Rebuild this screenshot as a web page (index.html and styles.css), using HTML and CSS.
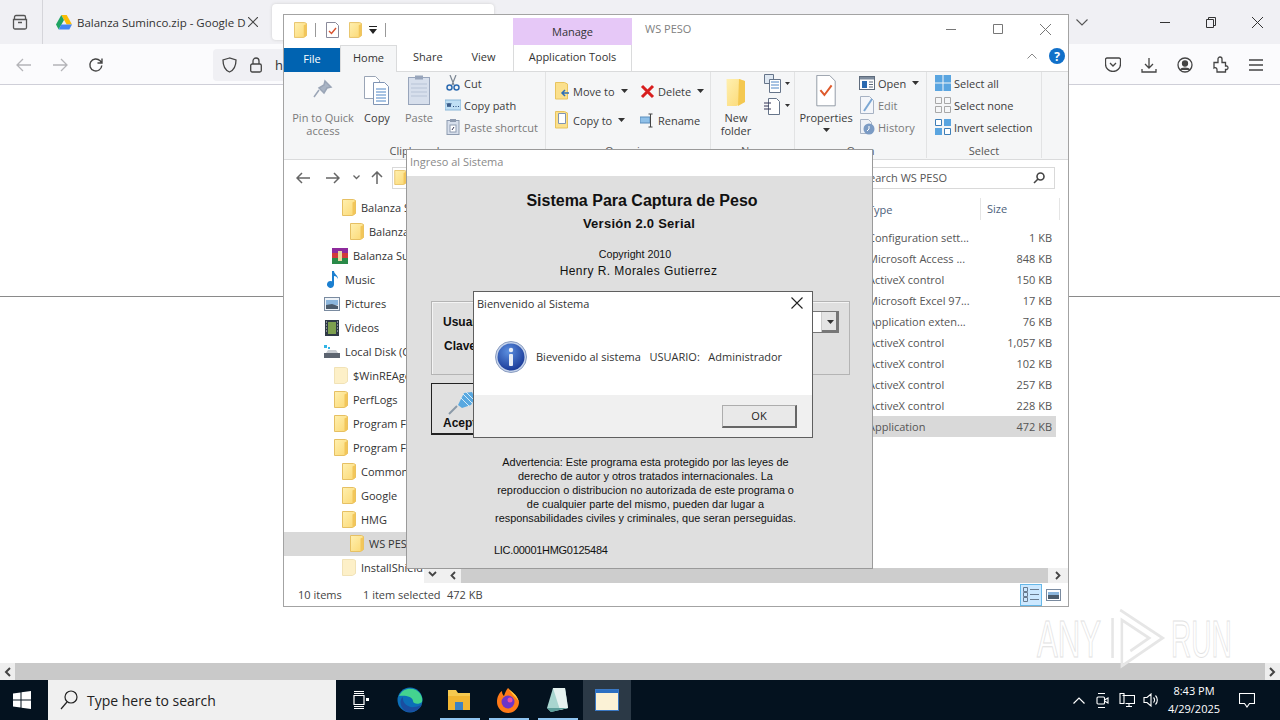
FILE: index.html
```html
<!DOCTYPE html>
<html lang="en">
<head>
<meta charset="utf-8">
<title>Sistema Para Captura de Peso</title>
<link rel="stylesheet" href="styles.css">
</head>
<body>
<svg class="sprites" width="0" height="0" aria-hidden="true">
  <defs>
    <linearGradient id="fy" x1="0" y1="0" x2="1" y2="1"><stop offset="0" stop-color="#fff0b0"/><stop offset="1" stop-color="#fbd873"/></linearGradient>
    <radialGradient id="ib" cx=".4" cy=".3" r=".8"><stop offset="0" stop-color="#5c8fe0"/><stop offset="1" stop-color="#12308f"/></radialGradient>
    <symbol id="folder" viewBox="0 0 14 17"><path d="M.5.5h11l2 1v13l-3 2h-10z" fill="url(#fy)" stroke="#e6c063" stroke-width="1"/><path d="M10.5 3.5v13.2l3-2.2V2z" fill="#f2c65a"/></symbol>
    <symbol id="pale" viewBox="0 0 14 17"><path d="M.5.5h11l2 1v13l-3 2h-10z" fill="#fdf0c8" stroke="#f1e2b6" stroke-width="1"/></symbol>
    <symbol id="caret" viewBox="0 0 7 4"><path d="M0 0h7L3.5 4z" fill="#333"/></symbol>
  </defs>
</svg>

<header class="tabstrip">
  <svg class="ff-view" width="16" height="16" viewBox="0 0 16 16" fill="none" stroke="#555" stroke-width="1.3"><path d="M1.5 5.5h13v8a1.5 1.5 0 0 1-1.5 1.5H3A1.5 1.5 0 0 1 1.5 13.5zM2.5 5.5V3a1.500 1.500 0 0 1 1.500-1.500h8A1.500 1.500 0 0 1 13.500 3v2.500M6 8.500h4"/></svg>
  <div class="tab">
    <svg class="tab-fav" width="16" height="15" viewBox="0 0 16 15"><path d="M5.300 0h5.400L16 9.500h-5.300z" fill="#fbbc04"/><path d="M5.300 0 0 9.500l2.700 5L8 5z" fill="#1fa463"/><path d="M2.700 14.500h10.600L16 9.500H5.300z" fill="#4285f4"/></svg>
    <span class="tab-title">Balanza Suminco.zip - Google D</span>
    <svg class="tab-x" width="10" height="10" viewBox="0 0 10 10" stroke="#444" stroke-width="1.100"><path d="M0 0l10 10M10 0L0 10"/></svg>
  </div>
  <div class="tab-active"><svg width="10" height="14" viewBox="0 0 10 14"><path d="M9 0a8 8 0 0 0 0 14z" fill="#2d8a6e"/></svg></div>
  <div class="strip-right">
    <svg class="chev" width="12" height="7" viewBox="0 0 12 7" fill="none" stroke="#555" stroke-width="1.100"><path d="M.5.500 6 6l5.500-5.500"/></svg>
    <svg class="wc wc-min" width="10" height="10" viewBox="0 0 10 10" stroke="#333"><path d="M0 5.500h10"/></svg>
    <svg class="wc" width="10" height="11" viewBox="0 0 10 11" fill="none" stroke="#333"><path d="M.5 2.500h7v8h-7zM2.500 2.500v-2h7v8h-2"/></svg>
    <svg class="wc" width="11" height="11" viewBox="0 0 11 11" stroke="#333"><path d="M0 0l11 11M11 0L0 11"/></svg>
  </div>
</header>

<nav class="toolbar">
  <svg class="tb-b" width="16" height="14" viewBox="0 0 16 14" fill="none" stroke="#b4b4b8" stroke-width="1.300"><path d="M15 7H1M7 1 1 7l6 6"/></svg>
  <svg class="tb-b" width="16" height="14" viewBox="0 0 16 14" fill="none" stroke="#b4b4b8" stroke-width="1.300"><path d="M1 7h14M9 1l6 6-6 6"/></svg>
  <svg class="tb-b" width="16" height="16" viewBox="0 0 16 16" fill="none" stroke="#444" stroke-width="1.400"><path d="M13.800 8.500a6 6 0 1 1-1.700-4.700L14 6M14 1.500V6H9.500"/></svg>
  <div class="urlbar">
    <svg width="15" height="16" viewBox="0 0 15 16" fill="none" stroke="#444" stroke-width="1.300"><path d="M7.500 1 1 3c0 6 1.500 10 6.500 12C12.500 13 14 9 14 3z"/></svg>
    <svg class="lock" width="12" height="16" viewBox="0 0 12 16" fill="none" stroke="#444" stroke-width="1.300"><rect x=".7" y="7" width="10.600" height="8" rx="1.500"/><path d="M3 7V4a3 3 0 0 1 6 0v3"/></svg>
    <span class="url-h">h</span>
  </div>
  <div class="tb-right">
    <svg width="16" height="15" viewBox="0 0 16 15" fill="none" stroke="#444" stroke-width="1.300"><path d="M2 1h12a1.500 1.500 0 0 1 1.500 1.500V7a7.500 7.500 0 0 1-15 0V2.500A1.500 1.500 0 0 1 2 1zM5 6l3 3 3-3"/></svg>
    <svg width="16" height="16" viewBox="0 0 16 16" fill="none" stroke="#444" stroke-width="1.300"><path d="M8 1v10M4 7l4 4 4-4M1 12v3h14v-3"/></svg>
    <svg width="16" height="16" viewBox="0 0 16 16" fill="none" stroke="#444" stroke-width="1.300"><circle cx="8" cy="8" r="7"/><circle cx="8" cy="6.500" r="2.500" fill="#444"/><path d="M3.500 13c1-2.500 8-2.500 9 0" fill="#444"/></svg>
    <svg width="16" height="17" viewBox="0 0 16 17" fill="none" stroke="#444" stroke-width="1.300"><path d="M1 6.500h4V3a2 2 0 0 1 4 0v3.500h3.500V10H14a2 2 0 0 1 0 3.500h-1.500V16H4v-2.500a2 2 0 0 0-3-1.500z"/></svg>
    <svg width="14" height="12" viewBox="0 0 14 12" stroke="#444" stroke-width="1.300"><path d="M0 1h14M0 6h14M0 11h14"/></svg>
  </div>
</nav>

<main class="page"><hr class="page-line"></main>

<div class="page-scroll">
  <span class="ps-btn"><svg width="7" height="10" viewBox="0 0 7 10" fill="none" stroke="#444" stroke-width="2"><path d="M6 1 2 5l4 4"/></svg></span>
  <span class="ps-btn"><svg width="7" height="10" viewBox="0 0 7 10" fill="none" stroke="#444" stroke-width="2"><path d="m1 1 4 4-4 4"/></svg></span>
</div>

<footer class="taskbar">
  <div class="start"><svg width="18" height="18" viewBox="0 0 18 18" fill="#fff"><path d="M0 2.500 7.500 1.400v7.100H0zM8.500 1.300 18 0v8.500H8.500zM0 9.500h7.500v7.100L0 15.500zM8.500 9.500H18V18l-9.500-1.300z"/></svg></div>
  <div class="search">
    <svg width="18" height="20" viewBox="0 0 18 20" fill="none" stroke="#222" stroke-width="1.200"><circle cx="11" cy="7" r="6"/><path d="M7 12 1 19"/></svg>
    <span>Type here to search</span>
  </div>
  <div class="task-icons">
    <span class="ti"><svg width="16" height="18" viewBox="0 0 16 18" fill="none" stroke="#fff" stroke-width="1.200"><path d="M1 .5h10M1 17.500h10M1 4.500h10v9H1zM1 2.500h10M1 15.500h10"/><rect x="13" y="7" width="3" height="3" fill="#fff" stroke="none"/></svg></span>
    <span class="ti"><svg width="26" height="26" viewBox="0 0 26 26"><circle cx="13" cy="13" r="12.500" fill="#0c6fb8"/><path d="M2 9C5 2 13 0 19 3c5 3 7 8 6 12-3 3-9 2-9-1 0-5-9-6-14-5z" fill="#44d38f"/><path d="M8 24C3 20 2 13 6 10c-1 6 5 11 11 10 3 0 6-1 8-3-2 6-10 10-17 7z" fill="#1a4ea0"/></svg></span>
    <span class="ti ti-run"><svg width="24" height="22" viewBox="0 0 24 22"><path d="M1 1h8l2 3h12v17H1z" fill="#f6c94f"/><rect x="1" y="7" width="22" height="14" fill="#f2b632"/><rect x="8" y="13" width="8" height="8" fill="#3d82c4"/></svg></span>
    <span class="ti ti-run"><svg width="24" height="26" viewBox="0 0 24 26"><path d="M12 1c3 4 9 6 11 14a11 11 0 0 1-22 0C1 10 3 6 6 4c0 3 1 4 2 5 1-3 2-6 4-8z" fill="#ff7a18"/><path d="M12 1c3 4 9 6 11 14-3-5-6-6-11-14z" fill="#ffc93a"/><circle cx="12" cy="15" r="6.500" fill="#6d35c9"/><circle cx="14" cy="13" r="2.500" fill="#f04ca0"/></svg></span>
    <span class="ti ti-run"><svg width="22" height="26" viewBox="0 0 22 26"><path d="M7 1h12l3 20-17 4L1 21z" fill="#a8d5cf"/><path d="M7 1h12l3 20-8 2z" fill="#e6f2f0"/><path d="M1 21l4 4 17-4z" fill="#5c9e9a"/></svg></span>
    <span class="ti ti-active"><svg width="24" height="22" viewBox="0 0 24 22"><rect x=".5" y=".5" width="23" height="21" fill="#fbf2d6" stroke="#3a78c4"/><rect x="1" y="1" width="22" height="3" fill="#2b6fc2"/></svg></span>
  </div>
  <div class="tray">
    <svg width="12" height="7" viewBox="0 0 12 7" fill="none" stroke="#fff" stroke-width="1.200"><path d="M.5 6.500 6 1l5.500 5.500"/></svg>
    <svg class="tr-m" width="13" height="17" viewBox="0 0 13 17" fill="none" stroke="#fff" stroke-width="1.100"><path d="M2 1.500h7M2 15.500h7"/><rect x="1" y="5" width="7.500" height="7" rx="1"/><path d="M8.500 8 12 6v5L8.500 9"/></svg>
    <svg class="tr-n" width="16" height="14" viewBox="0 0 16 14" fill="none" stroke="#fff" stroke-width="1.100"><path d="M3.500 2.500h12v8h-9M1 .5h4v10H1zM7 13.500h6M10 10.500v3"/></svg>
    <svg class="tr-v" width="16" height="14" viewBox="0 0 16 14" fill="none" stroke="#fff" stroke-width="1.100"><path d="M1 4.500h3L8 1v12L4 9.500H1zM10.500 4.500a3.500 3.500 0 0 1 0 5M12.500 2.500a6.500 6.500 0 0 1 0 9"/></svg>
    <div class="clock"><span>8:43 PM</span><span>4/29/2025</span></div>
    <svg class="notif" width="16" height="15" viewBox="0 0 16 15" fill="none" stroke="#fff" stroke-width="1.100"><path d="M.5.500h15v10h-5L8 14l-2.500-3.500h-5z"/></svg>
  </div>
</footer>

<section class="explorer">
  <div class="ex-title">
    <svg class="qa-f" width="13" height="16"><use href="#folder"/></svg>
    <i class="qa-sep"></i>
    <svg class="qa-d" width="13" height="16" viewBox="0 0 13 16"><path d="M.5.500h9l3 3v12H.5z" fill="#fff" stroke="#8a8a9a"/><path d="m3 9 2.500 2.500L10 6" fill="none" stroke="#d8502c" stroke-width="1.400"/></svg>
    <svg class="qa-f2" width="13" height="16"><use href="#folder"/></svg>
    <svg class="qa-a" width="8" height="8" viewBox="0 0 8 8"><path d="M0 0h8v1H0zM0 3h8L4 8z" fill="#222"/></svg>
    <i class="qa-sep qa-sep2"></i>
    <div class="manage">Manage</div>
    <span class="ex-name">WS PESO</span>
    <div class="ex-ctrl">
      <svg width="10" height="10" viewBox="0 0 10 10" stroke="#777"><path d="M0 5.500h10"/></svg>
      <svg width="10" height="10" viewBox="0 0 10 10" fill="none" stroke="#777"><path d="M.5.500h9v9h-9z"/></svg>
      <svg width="11" height="11" viewBox="0 0 11 11" stroke="#777"><path d="M0 0l11 11M11 0L0 11"/></svg>
    </div>
  </div>
  <div class="ex-tabs">
    <span class="t-file">File</span>
    <span class="t-home">Home</span>
    <span class="t-share">Share</span>
    <span class="t-view">View</span>
    <span class="t-app">Application Tools</span>
    <svg class="t-up" width="10" height="6" viewBox="0 0 10 6" fill="none" stroke="#888"><path d="M.5 5.500 5 1l4.500 4.500"/></svg>
    <span class="t-help">?</span>
  </div>
  <div class="ribbon">
    <div class="rg rg1">
      <div class="rg-body">
        <div class="big big-pin dis">
          <svg width="24" height="32" viewBox="0 0 24 32"><path d="M14 6l6 6-4 1-3 5-5-5 5-3zM8 15l-5 7" fill="#a9b4c4" stroke="#9aa5b6" stroke-width="1.500"/></svg>
          <span>Pin to Quick<br>access</span>
        </div>
        <div class="big big-copy">
          <svg width="26" height="32" viewBox="0 0 26 32"><path d="M.5 1.500h11l4 4v18H.5z" fill="#fff" stroke="#9aa5b6"/><path d="M9.500 7.500h11l4 4v18h-15z" fill="#fff" stroke="#7f94b4"/><path d="M12 14h10M12 17h10M12 20h10M12 23h10M12 26h10" stroke="#4f86c6"/></svg>
          <span>Copy</span>
        </div>
        <div class="big big-paste dis">
          <svg width="22" height="32" viewBox="0 0 22 32"><rect x=".5" y="2.500" width="21" height="27" fill="#d7dfec" stroke="#98a5bb"/><rect x="7" y=".5" width="8" height="4" fill="#98a5bb"/><path d="M3 9h16M3 13h16M3 17h16M3 21h16" stroke="#b7c3d6"/></svg>
          <span>Paste</span>
        </div>
        <div class="small">
          <div class="sm"><svg width="16" height="16" viewBox="0 0 16 16" fill="none"><path d="M5 0l4 10M11 0 7 10" stroke="#7c8794" stroke-width="1.200"/><circle cx="4.500" cy="12.500" r="2.500" stroke="#2c6ab0" stroke-width="1.500"/><circle cx="11.500" cy="12.500" r="2.500" stroke="#2c6ab0" stroke-width="1.500"/></svg>Cut</div>
          <div class="sm"><svg width="16" height="16" viewBox="0 0 16 16"><rect y="3" width="16" height="10" fill="#bfe0f5" stroke="#8ab6d8"/><path d="M2 6l1 4 1-4 1 4 1-4M8 9.500h1M10.500 9.500h1M13 9.500h1" fill="none" stroke="#2b4e7e"/></svg>Copy path</div>
          <div class="sm dis"><svg width="16" height="16" viewBox="0 0 16 16"><rect x="2" y="1.500" width="12" height="14" fill="#d7dfec" stroke="#8e9bb0"/><rect x="5" y="0" width="6" height="3" fill="#8e9bb0"/><rect x="5" y="6" width="6" height="7" fill="#fff" stroke="#8e9bb0"/><path d="M7 11l2-3" stroke="#335"/></svg>Paste shortcut</div>
        </div>
      </div>
      <div class="rg-label">Clipboard</div>
    </div>
    <div class="rg rg2">
      <div class="rg-body">
        <div class="org">
          <div class="org-row"><svg width="15" height="18" viewBox="0 0 15 18"><path d="M.5.500h9l3 1.500v15H.5z" fill="#fbe08c" stroke="#e8c45e"/><path d="M14 11H7M10 8l-3 3 3 3" fill="none" stroke="#2d6fb8" stroke-width="1.500"/></svg>Move to<svg class="car" width="7" height="4"><use href="#caret"/></svg></div>
          <div class="org-row"><svg width="15" height="18" viewBox="0 0 15 18"><path d="M.5.500h9l3 1.500v15H.5z" fill="#fbe08c" stroke="#e8c45e"/><path d="M3.500 2.500h7v10h-7z" fill="#fff" stroke="#7f94b4"/></svg>Copy to<svg class="car" width="7" height="4"><use href="#caret"/></svg></div>
        </div>
        <div class="org org-b">
          <div class="org-row"><svg width="15" height="15" viewBox="0 0 15 15" fill="none" stroke="#d81e1e" stroke-width="3"><path d="m2 2 11 11M13 2 2 13"/></svg>Delete<svg class="car" width="7" height="4"><use href="#caret"/></svg></div>
          <div class="org-row"><svg width="15" height="15" viewBox="0 0 15 15"><rect y="4" width="10" height="6" fill="#8fc0e8" stroke="#5b8dbd"/><path d="M10.500 1v13M8.500 1h4M8.500 14h4" stroke="#444"/></svg>Rename</div>
        </div>
      </div>
      <div class="rg-label">Organize</div>
    </div>
    <div class="rg rg3">
      <div class="rg-body">
        <div class="big big-new">
          <svg width="20" height="32" viewBox="0 0 20 32"><path d="M.5 4h13l5 2v21l-8 4H1z" fill="url(#fy)"/><path d="M13 4l6 2v21l-7 4z" fill="#f4c850"/></svg>
          <span>New<br>folder</span>
        </div>
        <div class="new-side">
          <span><svg width="17" height="19" viewBox="0 0 17 19" fill="none" stroke="#66758a"><path d="M.5.500h9v9h-9z" fill="#dfe8f2"/><path d="M5.500 5.500h11v13h-11z" fill="#fff"/><path d="M7 8h8M7 11h8M7 14h8" stroke="#4f86c6"/></svg><svg class="car" width="5" height="3" viewBox="0 0 7 4"><use href="#caret"/></svg></span>
          <span><svg width="17" height="19" viewBox="0 0 17 19" fill="none" stroke="#66758a"><path d="M4.500 2.500h8l3 3v13h-11z" fill="#fff"/><path d="M0 7h7M0 10h5M0 13h7" stroke="#335"/></svg><svg class="car" width="5" height="3" viewBox="0 0 7 4"><use href="#caret"/></svg></span>
        </div>
      </div>
      <div class="rg-label">New</div>
    </div>
    <div class="rg rg4">
      <div class="rg-body">
        <div class="big big-prop">
          <svg width="24" height="40" viewBox="0 0 24 40"><path d="M.5.500h16l7 7v31H.5z" fill="#fff" stroke="#7c8794"/><path d="M5 19l5 6 9-12" fill="none" stroke="#de5a2c" stroke-width="2.500"/></svg>
          <span>Properties</span>
          <svg class="car-c" width="7" height="4"><use href="#caret"/></svg>
        </div>
        <div class="small small-open">
          <div class="sm"><svg width="16" height="16" viewBox="0 0 16 16"><rect x=".5" y="1.500" width="15" height="13" fill="#fff" stroke="#5e6b7c"/><rect x="1" y="2" width="14" height="2.500" fill="#7e8c9e"/><rect x="3" y="6" width="5" height="7" fill="#2c6ab0"/><path d="M10 7h4M10 9.500h4M10 12h4" stroke="#5e6b7c"/></svg>Open<svg class="car" width="7" height="4"><use href="#caret"/></svg></div>
          <div class="sm dis"><svg width="16" height="18" viewBox="0 0 16 18"><path d="M1.500.500h9l4 4v13h-13z" fill="#f4f6fa" stroke="#a7b2c3"/><path d="M5 15 13 3" stroke="#7ba7d4" stroke-width="2"/></svg>Edit</div>
          <div class="sm dis"><svg width="16" height="16" viewBox="0 0 16 16"><path d="M1.500.500h8l3 3v11h-11z" fill="#eef1f6" stroke="#a7b2c3"/><circle cx="10" cy="10" r="5.500" fill="#7b9bc4"/><path d="M10 7v3l-2 2" stroke="#fff" fill="none"/></svg>History</div>
        </div>
      </div>
      <div class="rg-label">Open</div>
    </div>
    <div class="rg rg5">
      <div class="rg-body">
        <div class="small small-sel">
          <div class="sm"><svg width="16" height="16" viewBox="0 0 16 16"><path d="M0 0h7.500v7.500H0zM8.500 0H16v7.500H8.500zM0 8.500h7.500V16H0zM8.500 8.500H16V16H8.500z" fill="#5aa5e0"/></svg>Select all</div>
          <div class="sm"><svg width="16" height="16" viewBox="0 0 16 16" fill="none" stroke="#a8a8a8"><path d="M.5.500h6v6h-6zM9.500.500h6v6h-6zM.5 9.500h6v6h-6zM9.500 9.500h6v6h-6z"/></svg>Select none</div>
          <div class="sm"><svg width="16" height="16" viewBox="0 0 16 16" stroke="#3f7fb8"><path d="M.5.500h6v6h-6zM9.500 9.500h6v6h-6z" fill="#fff"/><path d="M9 0h7v7H9zM0 9h7v7H0z" fill="#5aa5e0" stroke="none"/></svg>Invert selection</div>
        </div>
      </div>
      <div class="rg-label">Select</div>
    </div>
  </div>
  <div class="ex-nav">
    <svg width="14" height="12" viewBox="0 0 14 12" fill="none" stroke="#666" stroke-width="1.500"><path d="M14 6H1M6 1 1 6l5 5"/></svg>
    <svg class="n-fw" width="14" height="12" viewBox="0 0 14 12" fill="none" stroke="#666" stroke-width="1.500"><path d="M0 6h13M8 1l5 5-5 5"/></svg>
    <svg class="n-dn" width="7" height="5" viewBox="0 0 7 5" fill="none" stroke="#666" stroke-width="1.300"><path d="m.5.500 3 3 3-3"/></svg>
    <svg class="n-up" width="12" height="13" viewBox="0 0 12 13" fill="none" stroke="#666" stroke-width="1.500"><path d="M6 13V1M1 6l5-5 5 5"/></svg>
    <div class="addr"><svg width="13" height="15"><use href="#folder"/></svg></div>
    <div class="srch"><span>Search WS PESO</span><svg width="12" height="12" viewBox="0 0 12 12" fill="none" stroke="#444" stroke-width="1.600"><circle cx="7.500" cy="4.500" r="3.500"/><path d="M5 7 1 11"/></svg></div>
  </div>
  <div class="ex-main">
    <div class="tree">
      <div class="tr l3"><svg width="14" height="17"><use href="#folder"/></svg>Balanza Suminco</div>
      <div class="tr l4"><svg width="14" height="17"><use href="#folder"/></svg>Balanza Suminco</div>
      <div class="tr l2"><svg width="16" height="16" viewBox="0 0 16 16"><rect width="16" height="5" fill="#8e2a9c"/><rect y="5" width="16" height="5" fill="#d33a3a"/><rect y="10" width="16" height="6" fill="#2a8a48"/><rect x="6" y="3" width="4" height="10" fill="#e8d9a0"/></svg>Balanza Suminco.zip</div>
      <div class="tr l1"><svg width="16" height="17" viewBox="0 0 14 17" fill="#1b7fd0"><path d="M7 0h2c0 3 4 4 4 8-1-2-2-3-4-3v8.500a3.500 3.500 0 1 1-2-3.200z"/></svg>Music</div>
      <div class="tr l1"><svg width="16" height="14" viewBox="0 0 16 14"><rect x=".5" y=".5" width="15" height="13" fill="#eef3f8" stroke="#7a8ba0"/><path d="M2 3h12v5H2z" fill="#8cb6dc"/><path d="M2 8l6-1 6 2v3H2z" fill="#4c5c6c"/></svg>Pictures</div>
      <div class="tr l1"><svg width="16" height="16" viewBox="0 0 14 16"><rect width="14" height="16" fill="#2f3a46"/><rect x="3" y="2" width="8" height="12" fill="#7ea04e"/><path d="M1 2h1M1 5h1M1 8h1M1 11h1M12 2h1M12 5h1M12 8h1M12 11h1" stroke="#ddd"/></svg>Videos</div>
      <div class="tr l1"><svg width="16" height="14" viewBox="0 0 16 14"><rect y="8" width="16" height="5" fill="#5c6470"/><path d="M2 8l2-3h8l2 3z" fill="#c8ccd2"/><rect y="0" width="3" height="3" fill="#33b5e5"/><rect x="4" y="2" width="2" height="2" fill="#33b5e5"/></svg>Local Disk (C:)</div>
      <div class="tr l2b"><svg width="14" height="17"><use href="#pale"/></svg>$WinREAgent</div>
      <div class="tr l2b"><svg width="14" height="17"><use href="#folder"/></svg>PerfLogs</div>
      <div class="tr l2b"><svg width="14" height="17"><use href="#folder"/></svg>Program Files</div>
      <div class="tr l2b"><svg width="14" height="17"><use href="#folder"/></svg>Program Files (x86)</div>
      <div class="tr l3"><svg width="14" height="17"><use href="#folder"/></svg>Common Files</div>
      <div class="tr l3"><svg width="14" height="17"><use href="#folder"/></svg>Google</div>
      <div class="tr l3"><svg width="14" height="17"><use href="#folder"/></svg>HMG</div>
      <div class="tr l4 tr-sel"><svg width="14" height="17"><use href="#folder"/></svg>WS PESO</div>
      <div class="tr l3"><svg width="14" height="17"><use href="#pale"/></svg>InstallShield</div>
    </div>
    <div class="tree-sb"><svg width="9" height="6" viewBox="0 0 9 6" fill="none" stroke="#444" stroke-width="1.800"><path d="m1 1 3.500 3.500L8 1"/></svg></div>
    <div class="list-col">
      <div class="list">
        <div class="l-head"><span class="c-type">Type</span><span class="c-size">Size</span></div>
        <div class="l-row"><span class="c-type">Configuration sett...</span><span class="c-kb">1 KB</span></div>
        <div class="l-row"><span class="c-type">Microsoft Access ...</span><span class="c-kb">848 KB</span></div>
        <div class="l-row"><span class="c-type">ActiveX control</span><span class="c-kb">150 KB</span></div>
        <div class="l-row"><span class="c-type">Microsoft Excel 97...</span><span class="c-kb">17 KB</span></div>
        <div class="l-row"><span class="c-type">Application exten...</span><span class="c-kb">76 KB</span></div>
        <div class="l-row"><span class="c-type">ActiveX control</span><span class="c-kb">1,057 KB</span></div>
        <div class="l-row"><span class="c-type">ActiveX control</span><span class="c-kb">102 KB</span></div>
        <div class="l-row"><span class="c-type">ActiveX control</span><span class="c-kb">257 KB</span></div>
        <div class="l-row"><span class="c-type">ActiveX control</span><span class="c-kb">228 KB</span></div>
        <div class="l-row l-sel"><span class="c-type">Application</span><span class="c-kb">472 KB</span></div>
      </div>
      <div class="list-sb">
        <span class="sb-btn"><svg width="6" height="9" viewBox="0 0 6 9" fill="none" stroke="#444" stroke-width="1.800"><path d="M5 1 1.500 4.500 5 8"/></svg></span>
        <span class="sb-thumb"></span>
        <span class="sb-btn sb-r"><svg width="6" height="9" viewBox="0 0 6 9" fill="none" stroke="#444" stroke-width="1.800"><path d="m1 1 3.500 3.500L1 8"/></svg></span>
      </div>
    </div>
  </div>
  <div class="ex-status">
    <span class="st-a">10 items</span><span class="st-b">1 item selected</span><span class="st-c">472 KB</span>
    <div class="views">
      <span class="v-on"><svg width="16" height="15" viewBox="0 0 16 15" fill="none" stroke="#6a7c90"><path d="M.5.500h4v4h-4zM.5 5.500h4v4h-4zM.5 10.500h4v4h-4zM7 2.500h9M7 7.500h9M7 12.500h9"/></svg></span>
      <span class="v-off"><svg width="15" height="12" viewBox="0 0 15 12"><rect x=".5" y=".5" width="14" height="11" fill="#fff" stroke="#7a8ba0"/><path d="M2 3h11v3H2z" fill="#8cb6dc"/><path d="M2 6h11v4H2z" fill="#4c5c6c"/></svg></span>
    </div>
  </div>
</section>

<section class="login">
  <div class="lg-title">Ingreso al Sistema</div>
  <div class="lg-body">
    <h1>Sistema Para Captura de Peso</h1>
    <h2>Versión 2.0 Serial</h2>
    <p class="lg-c">Copyright 2010</p>
    <p class="lg-a">Henry R. Morales Gutierrez</p>
    <div class="lg-panel">
      <div class="lg-labels"><b>Usuario:</b><b class="lb2">Clave:</b></div>
      <div class="combo"><span class="combo-btn"><svg width="7" height="4"><use href="#caret"/></svg></span></div>
    </div>
    <div class="lg-btn">
      <svg width="30" height="28" viewBox="0 0 30 28"><path d="M12 16 18 4l8-1 3 6-4 7-9 3z" fill="#58a8e0"/><path d="M14 8l9 9M17 5l9 9M20 3l7 7" stroke="#d4ecfa"/><path d="M11 17 3 25" stroke="#8b9aa8" stroke-width="2"/></svg>
      <b>Aceptar</b>
    </div>
    <p class="lg-w">Advertencia: Este programa esta protegido por las leyes de<br>derecho de autor y otros tratados internacionales. La<br>reproduccion o distribucion no autorizada de este programa o<br>de cualquier parte del mismo, pueden dar lugar a<br>responsabilidades civiles y criminales, que seran perseguidas.</p>
    <p class="lg-l">LIC.00001HMG0125484</p>
  </div>
</section>

<section class="msg">
  <div class="msg-title"><span>Bienvenido al Sistema</span><svg width="12" height="12" viewBox="0 0 12 12" stroke="#222" stroke-width="1.100"><path d="M.5.500l11 11M11.500.500l-11 11"/></svg></div>
  <div class="msg-body">
    <svg width="32" height="32" viewBox="0 0 32 32"><circle cx="16" cy="16" r="15.500" fill="#c6d4ec" stroke="#8b9dc0"/><circle cx="16" cy="16" r="13.500" fill="url(#ib)"/><rect x="14" y="13" width="4" height="12" rx="1" fill="#e8edf6"/><circle cx="16" cy="9" r="2.200" fill="#e8edf6"/></svg>
    <span>Bievenido al sistema&nbsp;&nbsp; USUARIO:&nbsp;&nbsp; Administrador</span>
  </div>
  <div class="msg-foot"><span class="ok">OK</span></div>
</section>

<div class="wm" aria-hidden="true">
  <span>ANY</span>
  <svg width="56" height="62" viewBox="0 0 66 62" preserveAspectRatio="none" fill="none" stroke="#e6e6e6" stroke-width="3"><path d="M3 10v40M12 2l50 28-48 28V12l32 18-22 13"/></svg>
  <span class="wm-r">RUN</span>
</div>
</body>
</html>
```
FILE: styles.css
```css
* { box-sizing: border-box; }
html, body { margin: 0; height: 720px; overflow: hidden; }
body { position: relative; width: 1280px; display: flex; flex-direction: column; font-family: "Open Sans", "Noto Sans", sans-serif; font-size: 11px; color: #333; background: #fff; }
svg { flex: none; display: block; }
.sprites { position: absolute; }
p, h1, h2 { margin: 0; }

/* Browser chrome */
.tabstrip { height: 44px; background: #f0f0f4; display: flex; align-items: center; position: relative; flex: none; }
.ff-view { margin-left: 12px; }
.tab { margin-left: 14px; height: 44px; width: 230px; border-left: 1px solid #d5d5da; display: flex; align-items: center; padding-left: 13px; }
.tab-title { margin-left: 5px; font-size: 11.5px; width: 169px; white-space: nowrap; overflow: hidden; color: #333; }
.tab-x { margin-left: 2px; }
.tab-active { height: 36px; width: 222px; background: #fff; border-radius: 4px; display: flex; align-items: center; padding-left: 8px; box-shadow: 0 0 3px #ccc; }
.strip-right { margin-left: auto; display: flex; align-items: center; }
.chev { margin-right: 72px; }
.wc { margin-right: 36px; }
.strip-right .wc:last-child { margin-right: 17px; }
.toolbar { height: 41px; background: #fbfbfd; border-bottom: 1px solid #cfcfd8; display: flex; align-items: center; padding: 1px 0 0 16px; gap: 20px; flex: none; }
.urlbar { margin-left: 89px; flex: 0 0 460px; height: 32px; background: #f0f0f4; border-radius: 4px; display: flex; align-items: center; padding-left: 9px; }
.lock { margin-left: 13px; }
.url-h { margin-left: 13px; font-size: 13px; }
.tb-right { margin-left: auto; display: flex; align-items: center; gap: 20px; padding-right: 17px; }
.page { flex: 1; padding-top: 211px; background: #fff; }
.page-line { margin: 0; border: 0; height: 1px; background: #8a8a8a; }
.page-scroll { height: 17px; background: #c9c9c9; display: flex; justify-content: space-between; flex: none; }
.ps-btn { width: 15px; background: #eeeeee; display: flex; align-items: center; justify-content: center; }

/* Taskbar */
.taskbar { height: 40px; background: #04121f; display: flex; align-items: center; flex: none; color: #fff; }
.start { width: 48px; display: flex; justify-content: center; padding-right: 4px; }
.search { width: 288px; height: 40px; background: #f0f0f0; display: flex; align-items: center; padding-left: 12px; gap: 9px; color: #222; font-size: 14px; }
.task-icons { display: flex; align-items: center; height: 40px; }
.ti { height: 40px; display: flex; align-items: center; justify-content: center; width: 49px; position: relative; }
.ti-run::after { content: ""; position: absolute; left: 6px; right: 3px; bottom: 0; height: 2px; background: #8fc4f0; }
.ti-active { background: #2b3946; width: 48px; margin-left: 2px; }
.tray { margin-left: auto; display: flex; align-items: center; padding-right: 25px; }
.tr-m { margin-left: 11px; }
.tr-n { margin-left: 10px; }
.tr-v { margin-left: 8px; }
.clock { display: flex; flex-direction: column; align-items: center; font-size: 11px; line-height: 18px; width: 68px; margin-left: 1px; color: #fff; }
.notif { margin-left: 11px; }

/* Explorer */
.explorer { position: absolute; left: 283px; top: 14px; width: 786px; height: 593px; background: #fff; border: 1px solid #a3a3a3; display: flex; flex-direction: column; }
.ex-title { height: 30px; display: flex; align-items: center; position: relative; flex: none; }
.qa-f { margin-left: 10px; }
.qa-sep { width: 1px; height: 14px; background: #999; margin-left: 8px; }
.qa-d { margin-left: 10px; }
.qa-f2 { margin-left: 10px; }
.qa-a { margin-left: 7px; }
.qa-sep2 { margin-left: 8px; }
.manage { margin-left: 127px; width: 119px; height: 27px; margin-top: 3px; background: #e6c8f7; display: flex; align-items: center; justify-content: center; color: #333; }
.ex-name { margin-left: 13px; margin-bottom: 3px; color: #808080; }
.ex-ctrl { margin-left: auto; display: flex; align-items: center; gap: 37px; padding: 0 17px 2px 0; }
.ex-tabs { height: 27px; display: flex; align-items: center; position: relative; flex: none; border-bottom: 1px solid #dadbdc; color: #333; }
.t-file { width: 56px; height: 24px; margin-top: 3px; padding-bottom: 3px; background: #0063b1; color: #fff; display: flex; align-items: center; justify-content: center; }
.t-home { width: 57px; height: 27px; padding-bottom: 3px; background: #f5f6f7; border: 1px solid #dadbdc; border-bottom: 0; display: flex; align-items: center; justify-content: center; }
.t-share { margin: 0 0 3px 16px; width: 29px; text-align: center; }
.t-view { margin: 0 0 3px 27px; width: 29px; text-align: center; }
.t-app { margin-left: 15px; width: 119px; height: 27px; padding-bottom: 3px; border-left: 1px solid #dadbdc; border-right: 1px solid #dadbdc; display: flex; align-items: center; justify-content: center; }
.t-up { margin: 0 0 4px auto; }
.t-help { width: 16px; height: 16px; border-radius: 50%; background: #1170c9; color: #fff; font-weight: 700; font-size: 12px; display: flex; align-items: center; justify-content: center; margin: 0 3px 4px 12px; }
.ribbon { height: 88px; background: #f5f6f7; border-bottom: 1px solid #dadbdc; display: flex; flex: none; color: #3c3c3c; }
.rg { display: flex; flex-direction: column; border-right: 1px solid #e2e3e4; height: 86px; }
.rg1 { width: 262px; }
.rg2 { width: 165px; }
.rg3 { width: 84px; }
.rg4 { width: 132px; }
.rg5 { width: 115px; }
.rg-body { height: 70px; display: flex; }
.rg-label { height: 14px; text-align: center; line-height: 14px; color: #555; margin-top: 3px; }
.dis { color: #7a7a7a; }
.big { display: flex; flex-direction: column; align-items: center; text-align: center; line-height: 13px; padding-top: 3px; }
.big svg { height: 32px; margin-bottom: 4px; }
.big-pin { width: 66px; margin-left: 6px; }
.big-copy, .big-paste { width: 42px; }
.small { margin-left: 5px; display: flex; flex-direction: column; }
.sm { height: 22px; display: flex; align-items: center; gap: 3px; white-space: nowrap; }
.car { margin-left: 3px; }
.org { margin-left: 9px; width: 76px; flex: none; display: flex; flex-direction: column; padding-top: 8px; gap: 7px; }
.org-b { margin-left: 9px; width: 65px; }
.org-row { height: 22px; display: flex; align-items: center; gap: 3px; white-space: nowrap; }
.big-new { width: 50px; }
.new-side { display: flex; flex-direction: column; gap: 3px; margin-left: 3px; padding-top: 2px; }
.new-side span { display: flex; align-items: center; gap: 1px; }
.big-prop { width: 60px; margin-left: 1px; }
.big-prop svg:first-child { height: 32px; margin-bottom: 4px; width: 20px; }
.big .car-c { height: 4px; margin: 4px 0 0; }
.small-open { margin-left: 3px; }
.small-sel { margin-left: 8px; }
.ex-nav { height: 35px; display: flex; align-items: center; flex: none; padding-left: 12px; position: relative; }
.n-fw { margin-left: 16px; }
.n-dn { margin-left: 13px; }
.n-up { margin-left: 11px; }
.addr { margin-left: 9px; width: 300px; height: 22px; border: 1px solid #d9d9d9; display: flex; align-items: center; padding-left: 1px; }
.srch { margin-left: 167px; width: 196px; height: 22px; border: 1px solid #d9d9d9; display: flex; align-items: center; justify-content: space-between; padding: 0 9px 0 3px; color: #555; }
.ex-main { flex: 1; display: flex; min-height: 0; }
.tree { width: 140px; overflow: hidden; flex: none; padding-top: 1px; }
.tr { height: 24px; padding-bottom: 1px; display: flex; align-items: center; gap: 5px; white-space: nowrap; color: #333; }
.l1 { padding-left: 40px; }
.l2 { padding-left: 48px; }
.l2b { padding-left: 50px; }
.l3 { padding-left: 58px; }
.l4 { padding-left: 66px; }
.tr-sel { background: #d9d9d9; }
.tree-sb { width: 16px; flex: none; background: #f0f0f0; display: flex; align-items: flex-end; justify-content: center; padding-bottom: 6px; }
.list-col { flex: 1; min-width: 0; display: flex; flex-direction: column; }
.list { flex: 1; min-height: 0; padding-top: 3px; }
.l-head { height: 22px; display: flex; align-items: center; color: #4c607a; margin-bottom: 7px; }
.c-size { border-left: 1px solid #e5e5e5; border-right: 1px solid #e5e5e5; padding-left: 6px; height: 22px; line-height: 22px; width: 80px; flex: none; }
.c-type { padding-left: 428px; width: 540px; flex: none; white-space: nowrap; }
.l-row { height: 21px; display: flex; align-items: center; margin-right: 12px; color: #555; }
.c-kb { margin-left: auto; padding-right: 4px; white-space: nowrap; }
.l-sel { background: #d9d9d9; }
.list-sb { height: 15px; flex: none; display: flex; background: #f0f0f0; padding-left: 5px; }
.sb-btn { width: 16px; display: flex; align-items: center; justify-content: center; }
.sb-r { width: 20px; }
.sb-thumb { flex: 1; background: #cdcdcd; }
.ex-status { height: 23px; flex: none; display: flex; align-items: center; color: #444; position: relative; }
.st-a { margin-left: 14px; width: 65px; }
.st-b { width: 84px; white-space: nowrap; }
.views { margin-left: auto; display: flex; gap: 2px; margin-right: 6px; }
.v-on { width: 22px; height: 22px; background: #cce8ff; border: 1px solid #66b8e8; display: flex; align-items: center; justify-content: center; }
.v-off { width: 18px; height: 22px; display: flex; align-items: center; justify-content: center; }

/* Login window */
.login { position: absolute; left: 406px; top: 149px; width: 467px; height: 420px; border: 1px solid #9a9a9a; background: #dfdfdf; display: flex; flex-direction: column; }
.lg-title { height: 26px; background: #fff; color: #8a8a8a; line-height: 23px; padding-left: 3px; font-size: 11px; flex: none; }
.lg-body { flex: 1; display: flex; flex-direction: column; align-items: center; font-family: "Liberation Sans", Arial, sans-serif; color: #111; padding-top: 15px; }
.lg-body h1 { font-size: 16px; line-height: 19px; font-weight: 700; margin-left: 5px; }
.lg-body h2 { font-size: 13px; line-height: 16px; font-weight: 700; margin-top: 6px; letter-spacing: .25px; margin-left: -1px; }
.lg-c { font-size: 10.7px; line-height: 14px; margin: 15px 9px 0 0; }
.lg-a { font-size: 12px; line-height: 15px; margin: 3px 2px 0 0; letter-spacing: .45px; }
.lg-panel { align-self: flex-start; margin: 22px 0 0 24px; width: 419px; height: 74px; border: 1px solid #b4b4b4; box-shadow: inset 1px 1px 0 #f4f4f4; padding: 8px 10px 0 11px; display: flex; justify-content: space-between; position: relative; }
.lg-labels { display: flex; flex-direction: column; font-size: 12px; line-height: 24px; }
.lb2 { margin-left: 1px; }
.combo { width: 350px; height: 22px; margin-top: 1px; background: #fff; border: 1px solid #777; display: flex; justify-content: flex-end; }
.combo-btn { width: 17px; background: #e4e4e4; border-left: 1px solid #ccc; display: flex; align-items: center; justify-content: center; box-shadow: inset -2px -2px 0 #777; }
.lg-btn { align-self: flex-start; margin: 8px 0 0 24px; width: 100px; height: 52px; border: 1px solid #222; border-right-width: 2px; border-bottom-width: 2px; background: #e0e0e0; display: flex; flex-direction: column; align-items: flex-start; padding: 5px 0 0 11px; font-size: 12px; line-height: 15px; }
.lg-btn svg { margin-left: 3px; margin-bottom: -1px; }
.lg-w { font-size: 10.9px; line-height: 14px; text-align: center; margin: 20px 0 0 12px; white-space: nowrap; }
.lg-l { align-self: flex-start; margin: 18px 0 0 87px; font-size: 11px; line-height: 14px; letter-spacing: -.3px; }

/* Message box */
.msg { position: absolute; left: 473px; top: 291px; width: 340px; height: 147px; background: #fff; border: 1px solid #5f5f5f; display: flex; flex-direction: column; font-size: 11px; color: #333; }
.msg-title { height: 24px; display: flex; align-items: center; justify-content: space-between; padding: 0 9px 2px 3px; flex: none; }
.msg-body { flex: 1; display: flex; align-items: center; gap: 9px; padding: 2px 0 0 21px; }
.msg-foot { height: 42px; background: #f0f0f0; display: flex; align-items: center; justify-content: flex-end; padding: 0 15px 0 0; flex: none; }
.ok { width: 75px; height: 23px; background: #e9e9e9; border: 1px solid #adadad; border-right: 2px solid #666; border-bottom: 2px solid #666; display: flex; align-items: center; justify-content: center; color: #222; }

/* Watermark */
.wm { position: absolute; left: 1037px; top: 608px; height: 62px; display: flex; align-items: center; font-family: "Liberation Sans", sans-serif; font-size: 52px; }
.wm svg { margin-left: 10px; }
.wm span { color: rgba(255,255,255,.15); -webkit-text-stroke: 1px #e2e2e2; transform: scaleX(.6); transform-origin: left center; width: 63px; overflow: visible; }
.wm .wm-r { margin-left: 5px; transform: scaleX(.54); }
```
